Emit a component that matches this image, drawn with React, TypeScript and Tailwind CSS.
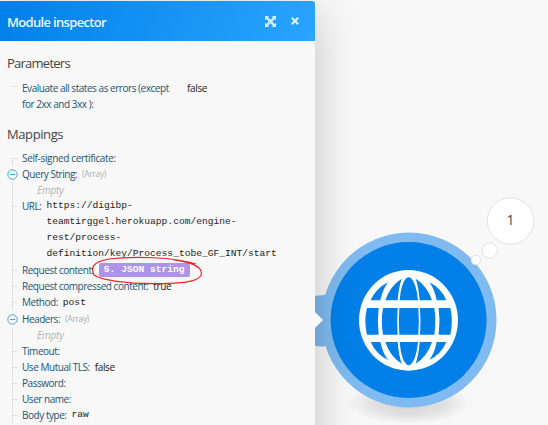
import type { ReactNode } from "react";

const sans = "font-['Open_Sans','Noto_Sans',sans-serif]";
const mono = "font-['Liberation_Mono',monospace] text-[9.6px] text-[#222]";

function ExpandIcon() {
  return (
    <svg width="11" height="11" viewBox="0 0 11 11" fill="#d3ecff">
      <path d="M0 0h4.2L3 1.2l2.5 2.5L8 1.2 6.8 0H11v4.2L9.8 3 7.3 5.5 9.8 8 11 6.800V11H6.800L8 9.800 5.500 7.300 3 9.800 4.200 11H0V6.800L1.200 8l2.500-2.500L1.200 3 0 4.200z" />
    </svg>
  );
}

function CloseIcon() {
  return (
    <svg width="8" height="8" viewBox="0 0 8 8" stroke="#d9efff" strokeWidth="2.2">
      <path d="M.8.8l6.400 6.400M7.200.8L.8 7.200" />
    </svg>
  );
}

function Collapse() {
  return (
    <svg className="block" width="11" height="11" viewBox="0 0 11 11" fill="#f8f8f8" stroke="#4ba3d6">
      <circle cx="5.500" cy="5.500" r="4.700" />
      <path d="M3 5.500h5" />
    </svg>
  );
}

type Kind = "first" | "mid" | "node" | "line";

function Gutter({ kind }: { kind: Kind }) {
  if (kind === "node")
    return (
      <div className="flex h-4 w-[22px] shrink-0 items-center pl-[7px]">
        <Collapse />
      </div>
    );
  return (
    <div className="flex w-[22px] shrink-0 self-stretch pl-3">
      <div className={`w-px bg-[#dde1e3] ${kind === "first" ? "mt-2" : ""}`} />
      {kind !== "line" && <div className="mt-2 h-px w-1 bg-[#dde1e3]" />}
    </div>
  );
}

type RowProps = { label: string; children?: ReactNode; kind?: Kind; tracking?: string };

function Row({ label, children, kind = "mid", tracking = "tracking-[-0.46px]" }: RowProps) {
  return (
    <div className="flex min-h-4">
      <Gutter kind={kind} />
      <span className={`h-4 shrink-0 whitespace-nowrap text-[#1c5472] ${tracking}`}>{label}</span>
      <div className="ml-[5px]">{children}</div>
    </div>
  );
}

function Empty() {
  return (
    <div className="flex h-4">
      <Gutter kind="line" />
      <span className="ml-[15px] italic tracking-[-0.2px] text-[#b0b3b5]">Empty</span>
    </div>
  );
}

const ArrayTag = () => <span className="block text-[8.5px] tracking-[-0.35px] text-[#acb0b3]">(Array)</span>;

function Globe() {
  const caps = (
    <>
      <path d="M299 301Q303 250 319 234Q326 229 333 234Q349 250 354 301Z" />
      <path d="M256 301Q270 258 305 236Q296 262 293 301Z" />
      <path d="M396 301Q382 258 347 236Q356 262 359 301Z" />
      <path d="M212 301Q228 265 264 247Q248 268 241 301Z" />
      <path d="M439 301Q424 265 388 247Q404 268 410 301Z" />
    </>
  );
  return (
    <g transform="translate(300 200) scale(.33333)" fill="#0280e8">
      <ellipse cx="325.500" cy="361" rx="148.500" ry="151" fill="#fff" />
      {caps}
      <g transform="translate(0 727) scale(1 -1)">{caps}</g>
      <path d="M201 324Q191 363 201 404H236Q231 363 236 324Z" />
      <path d="M249 324Q242 363 249 404H293Q290 363 293 324Z" />
      <path d="M298 324Q295 363 298 404H355Q358 363 355 324Z" />
      <path d="M360 324Q363 363 360 404H403Q409 363 403 324Z" />
      <path d="M416 324Q421 363 416 404H451Q460 363 451 324Z" />
    </g>
  );
}

function Canvas() {
  return (
    <svg className="absolute inset-0" width="548" height="425" viewBox="0 0 548 425">
      <defs>
        <radialGradient id="ground">
          <stop offset="0" stopColor="#000" stopOpacity=".16" />
          <stop offset=".6" stopColor="#000" stopOpacity=".09" />
          <stop offset="1" stopColor="#000" stopOpacity="0" />
        </radialGradient>
      </defs>
      <ellipse cx="408.500" cy="403" rx="62" ry="21" fill="url(#ground)" />
      <path d="M312 297Q317 295 325 295V346.500Q317 346.500 312 345z" fill="#7db9ee" />
      <circle cx="409" cy="320" r="87.500" fill="#7fbbf0" />
      <circle cx="408.600" cy="320" r="78" fill="#0280e8" />
      <Globe />
      <g fill="#fff" stroke="#e2e2e2">
        <circle cx="476" cy="260" r="4.800" />
        <circle cx="489.700" cy="250.500" r="7.700" />
        <circle cx="510.500" cy="221" r="23.200" />
      </g>
      <text x="510.500" y="225" textAnchor="middle" fontSize="14" fill="#484848" className={sans}>
        1
      </text>
    </svg>
  );
}

export default function App() {
  return (
    <div className={`relative h-[425px] w-[548px] overflow-hidden bg-[#f8f8f8] ${sans}`}>
      <Canvas />
      <div className="relative flex h-[470px] w-[315px] flex-col pt-px">
        <section className="flex flex-1 flex-col rounded-tr-[3px] bg-[#f8f8f8] text-[10px] leading-4 tracking-[-0.35px] shadow-[0_10px_45px_rgba(0,0,0,0.22)]">
          <header className="flex h-10 shrink-0 items-center rounded-tr-[3px] bg-linear-[110deg,#0080e8,#29a4ff] pl-[7px] pr-4">
            <h1 className="flex-1 pt-[2px] text-[13px] font-semibold tracking-[-0.67px] text-[#eef7ff]">Module inspector</h1>
            <ExpandIcon />
            <div className="ml-[15px]">
              <CloseIcon />
            </div>
          </header>
          <h2 className="mt-[14px] pl-[7px] text-[13px] tracking-[-0.75px] text-[#444]">Parameters</h2>
          <div className="mt-[9px] flex">
            <div className="w-[22px] shrink-0 pl-3 pt-[6px]">
              <div className="h-px w-[5px] bg-[#dde1e3]" />
            </div>
            <div className="w-[165px] tracking-[-0.46px] text-[#1c5472]">
              Evaluate all states as errors (except
              <br />
              for 2xx and 3xx ):
            </div>
            <span className="text-[#222]">false</span>
          </div>
          <h2 className="mb-2 mt-[14px] pl-[7px] text-[13px] tracking-[-0.4px] text-[#444]">Mappings</h2>
          <Row label="Self-signed certificate:" kind="first" tracking="tracking-[-0.34px]" />
          <Row label="Query String:" kind="node">
            <ArrayTag />
          </Row>
          <Empty />
          <Row label="URL:">
            <div className={`${mono} tracking-normal`}>
              https://digibp-
              <br />
              teamtirggel.herokuapp.com/engine-
              <br />
              rest/process-
              <br />
              definition/key/Process_tobe_GF_INT/start
            </div>
          </Row>
          <div className="relative">
            <Row label="Request content:">
              <div className="mt-px flex h-[14px] w-[91px] items-center justify-center rounded-[2px] bg-[#ad93ea] font-['Liberation_Mono',monospace] text-[9.600px] font-bold tracking-normal text-white">
                5. JSON string
              </div>
            </Row>
            <svg className="absolute left-[90px] top-[-6px]" width="116" height="30" viewBox="90 256 116 30" fill="none" stroke="#ee2429" strokeWidth="1.200">
              <path d="M196 264C174 257 133 256 109 259C91 262 91 269 94 275C100 280 128 284 157 283.500C184 284 202 281 201.500 273C201 265 188 262 174 260" />
            </svg>
          </div>
          <Row label="Request compressed content:">
            <span className="block text-[#222]">true</span>
          </Row>
          <Row label="Method:">
            <span className={`${mono} block pt-px leading-[15px] tracking-normal`}>post</span>
          </Row>
          <div className="pt-px">
            <Row label="Headers:" kind="node">
              <ArrayTag />
            </Row>
          </div>
          <Empty />
          <Row label="Timeout:" />
          <Row label="Use Mutual TLS:">
            <span className="block text-[#222]">false</span>
          </Row>
          <Row label="Password:" />
          <Row label="User name:" />
          <Row label="Body type:">
            <span className={`${mono} block tracking-normal`}>raw</span>
          </Row>
        </section>
        <svg className="absolute left-[315px] top-[312px]" width="8" height="16" fill="#f8f8f8">
          <path d="M0 0l8 8-8 8z" />
        </svg>
      </div>
    </div>
  );
}
